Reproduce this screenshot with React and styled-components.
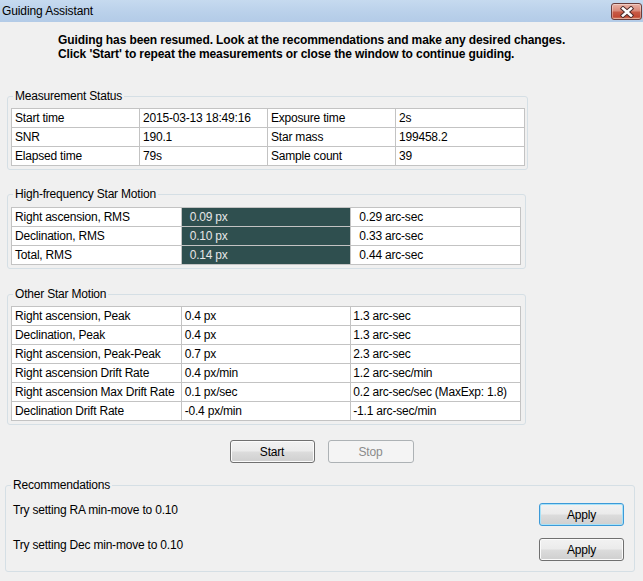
import React from "react";
import styled, { createGlobalStyle } from "styled-components";

const GlobalStyle = createGlobalStyle`
  html, body {
    margin: 0;
    padding: 0;
    background: #f0f0f0;
  }
  body {
    font-family: "Liberation Sans", Arial, sans-serif;
    font-size: 12px;
    color: #000;
  }
  * {
    box-sizing: border-box;
  }
`;

const Window = styled.div`
  width: 643px;
  height: 581px;
  overflow: hidden;
  background: #f0f0f0;
  display: flex;
  flex-direction: column;
`;

const TitleBar = styled.div`
  height: 22px;
  flex: none;
  display: flex;
  align-items: flex-start;
  justify-content: space-between;
  background: linear-gradient(to bottom, #c6daef 0%, #b9d0ea 60%, #b3cbe7 100%);
`;

const Title = styled.span`
  padding: 4px 0 0 2px;
  line-height: 14px;
  letter-spacing: -0.1px;
`;

const CloseButton = styled.div`
  width: 31px;
  height: 17px;
  margin: 3px 1px 0 0;
  border: 1px solid #6b3d3b;
  border-radius: 3px;
  display: flex;
  align-items: center;
  justify-content: center;
  background: linear-gradient(to bottom, #e9b2a6 0%, #d98a7a 45%, #c75a45 55%, #c24a35 85%, #d98a6a 100%);
  box-shadow: inset 0 0 0 1px rgba(255, 255, 255, 0.35);
`;

const Message = styled.div`
  margin: 11px 0 0 58px;
  font-weight: bold;
  line-height: 14px;
  letter-spacing: -0.1px;
`;

const Content = styled.div`
  display: flex;
  flex-direction: column;
`;

const GroupBox = styled.fieldset`
  width: ${(p) => p.$w}px;
  margin: ${(p) => p.$mt}px 0 0 ${(p) => p.$ml}px;
  padding: ${(p) => p.$pt}px ${(p) => p.$pr}px ${(p) => p.$pb}px ${(p) => p.$pl}px;
  border: 1px solid #d5dfe5;
  border-radius: 3px;
  min-width: 0;
`;

const Legend = styled.legend`
  padding: 0 2px;
  margin-left: ${(p) => p.$ml}px;
  line-height: 14px;
  letter-spacing: -0.2px;
`;

const Grid = styled.table`
  width: ${(p) => p.$w}px;
  table-layout: fixed;
  border-collapse: collapse;
  border: 1px solid #a0a0a0;
  background: #fff;
  font-size: 12px;
  letter-spacing: -0.2px;
`;

const Cell = styled.td`
  height: 19px;
  padding: 0 2px 0 ${(p) => p.$pad || 3}px;
  border: 1px solid #c3c3c3;
  line-height: 17px;
  white-space: nowrap;
  overflow: hidden;
  background: ${(p) => (p.$dark ? "#2f4f4f" : "#fff")};
  color: ${(p) => (p.$dark ? "#e6e6e6" : "#000")};
`;

const ButtonRow = styled.div`
  display: flex;
  justify-content: center;
  gap: 13px;
  margin-top: 15px;
`;

const Button = styled.button`
  width: ${(p) => p.$w || 85}px;
  height: 23px;
  padding: 0;
  font-family: "Liberation Sans", Arial, sans-serif;
  font-size: 12px;
  letter-spacing: -0.2px;
  border-radius: 3px;
  border: 1px solid ${(p) => (p.$focus ? "#3c9ad8" : "#707070")};
  color: #000;
  background: linear-gradient(to bottom, #f2f2f2 0%, #ebebeb 48%, #dcdcdc 52%, #cfcfcf 100%);
  box-shadow: inset 0 0 0 1px ${(p) => (p.$focus ? "#a8e2f8" : "#fbfbfb")};

  &:disabled {
    border-color: #adb2b5;
    background: #f4f4f4;
    color: #8b8b8b;
    box-shadow: none;
  }
`;

const RecRow = styled.div`
  display: flex;
  align-items: flex-start;
  justify-content: space-between;
  margin-top: ${(p) => p.$mt || 0}px;
`;

const RecText = styled.span`
  line-height: 14px;
  letter-spacing: -0.2px;
`;

const CloseIcon = () => (
  <svg width="16" height="12" viewBox="0 0 16 12">
    <path d="M4 2.5 L12 9.5 M12 2.5 L4 9.5" stroke="#4a2a2a" strokeWidth="4.4" strokeLinecap="square" />
    <path d="M4 2.5 L12 9.5 M12 2.5 L4 9.5" stroke="#fff" strokeWidth="2.6" strokeLinecap="square" />
  </svg>
);

const measurement = [
  ["Start time", "2015-03-13 18:49:16", "Exposure time", "2s"],
  ["SNR", "190.1", "Star mass", "199458.2"],
  ["Elapsed time", "79s", "Sample count", "39"],
];

const highFreq = [
  ["Right ascension, RMS", "0.09 px", "0.29 arc-sec"],
  ["Declination, RMS", "0.10 px", "0.33 arc-sec"],
  ["Total, RMS", "0.14 px", "0.44 arc-sec"],
];

const otherMotion = [
  ["Right ascension, Peak", "0.4 px", "1.3 arc-sec"],
  ["Declination, Peak", "0.4 px", "1.3 arc-sec"],
  ["Right ascension, Peak-Peak", "0.7 px", "2.3 arc-sec"],
  ["Right ascension Drift Rate", "0.4 px/min", "1.2 arc-sec/min"],
  ["Right ascension Max Drift Rate", "0.1 px/sec", "0.2 arc-sec/sec (MaxExp: 1.8)"],
  ["Declination Drift Rate", "-0.4 px/min", "-1.1 arc-sec/min"],
];

export default function App() {
  return (
    <>
      <GlobalStyle />
      <Window>
        <TitleBar>
          <Title>Guiding Assistant</Title>
          <CloseButton>
            <CloseIcon />
          </CloseButton>
        </TitleBar>

        <Message>
          Guiding has been resumed. Look at the recommendations and make any desired changes.
          <br />
          Click 'Start' to repeat the measurements or close the window to continue guiding.
        </Message>

        <Content>
          <GroupBox $w={521} $mt={28} $ml={7} $pt={5} $pr={3} $pb={3} $pl={3}>
            <Legend $ml={2}>Measurement Status</Legend>
            <Grid $w={513}>
              <colgroup>
                <col style={{ width: 128 }} />
                <col style={{ width: 128 }} />
                <col style={{ width: 128 }} />
                <col style={{ width: 129 }} />
              </colgroup>
              <tbody>
                {measurement.map((r) => (
                  <tr key={r[0]}>
                    {r.map((c) => (
                      <Cell key={c}>{c}</Cell>
                    ))}
                  </tr>
                ))}
              </tbody>
            </Grid>
          </GroupBox>

          <GroupBox $w={519} $mt={17} $ml={7} $pt={6} $pr={3} $pb={3} $pl={3}>
            <Legend $ml={2}>High-frequency Star Motion</Legend>
            <Grid $w={510}>
              <tbody>
                {highFreq.map((r) => (
                  <tr key={r[0]}>
                    <Cell>{r[0]}</Cell>
                    <Cell $dark $pad={8}>{r[1]}</Cell>
                    <Cell $pad={8}>{r[2]}</Cell>
                  </tr>
                ))}
              </tbody>
            </Grid>
          </GroupBox>

          <GroupBox $w={519} $mt={18} $ml={7} $pt={5} $pr={3} $pb={3} $pl={3}>
            <Legend $ml={2}>Other Star Motion</Legend>
            <Grid $w={510}>
              <tbody>
                {otherMotion.map((r) => (
                  <tr key={r[0]}>
                    <Cell>{r[0]}</Cell>
                    <Cell>{r[1]}</Cell>
                    <Cell $pad={2}>{r[2]}</Cell>
                  </tr>
                ))}
              </tbody>
            </Grid>
          </GroupBox>

          <ButtonRow>
            <Button>Start</Button>
            <Button $w={86} disabled>
              Stop
            </Button>
          </ButtonRow>

          <GroupBox $w={630} $mt={15} $ml={5} $pt={11} $pr={10} $pb={10} $pl={7}>
            <Legend $ml={-2}>Recommendations</Legend>
            <RecRow>
              <RecText>Try setting RA min-move to 0.10</RecText>
              <Button $focus>Apply</Button>
            </RecRow>
            <RecRow $mt={12}>
              <RecText>Try setting Dec min-move to 0.10</RecText>
              <Button>Apply</Button>
            </RecRow>
          </GroupBox>
        </Content>
      </Window>
    </>
  );
}
